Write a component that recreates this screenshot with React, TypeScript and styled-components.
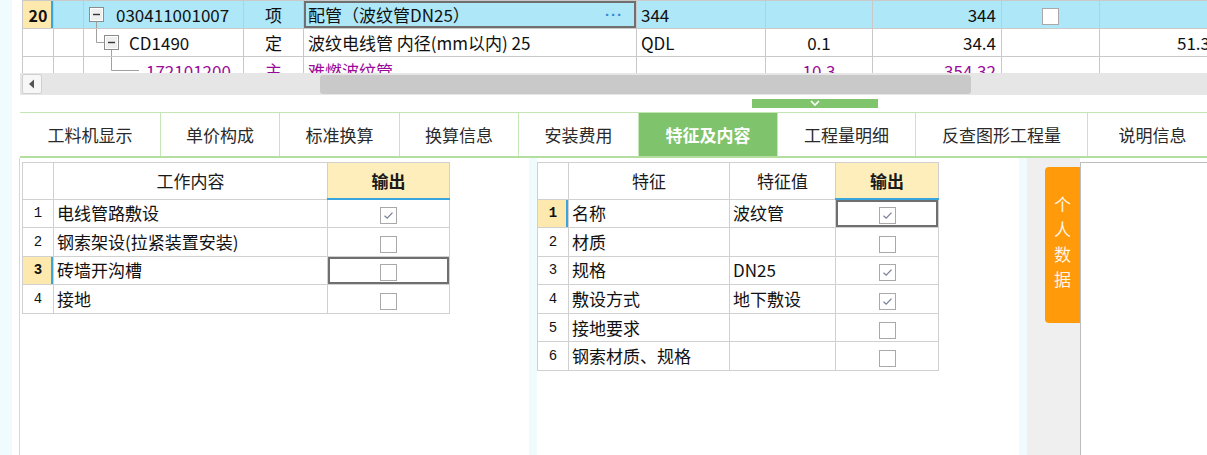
import styled, { createGlobalStyle } from "styled-components";

const GlobalStyle = createGlobalStyle`
  html, body {
    margin: 0;
    padding: 0;
    background: #ffffff;
  }
  body {
    font-family: "Noto Sans CJK SC", "Liberation Sans", sans-serif;
    color: #111;
    overflow: hidden;
  }
`;

const ROW_BLUE = "#aee7f8";
const HEAD_YELLOW = "#fde9ad";
const MARK_BLUE = "#38a5dc";
const LINE = "#c9c9c9";
const PURPLE = "#9a0a9a";

const Page = styled.div`
  display: flex;
  width: 1207px;
  height: 455px;
  overflow: hidden;
  background: #fff;
`;

const SideStrip = styled.div`
  flex: none;
  width: 12px;
  background: #f0fbfe;
`;

const Main = styled.div`
  flex: 1;
  min-width: 0;
  margin-left: 7px;
  display: flex;
  flex-direction: column;
`;

/* ---------- top grid ---------- */

const TopGridWrap = styled.div`
  height: 73px;
  overflow: hidden;
  padding-left: 3px;
`;

const GridTable = styled.table`
  border-collapse: collapse;
  table-layout: fixed;
  width: 1193px;
  font-size: 17px;
`;

const GridRow = styled.tr<{ $selected?: boolean; $purple?: boolean }>`
  height: 28px;
  background: ${(p) => (p.$selected ? ROW_BLUE : "#fff")};
  color: ${(p) => (p.$purple ? PURPLE : "#111")};
`;

const Cell = styled.td<{
  $align?: "left" | "center" | "right";
  $active?: boolean;
  $head?: boolean;
}>`
  height: 27px;
  padding: 0 ${(p) => (p.$align === "right" ? "5px" : "4px")};
  border: 1px solid ${LINE};
  text-align: ${(p) => p.$align ?? "left"};
  white-space: nowrap;
  overflow: hidden;
  box-sizing: border-box;
  line-height: 24px;
  ${(p) =>
    p.$head &&
    `background: ${HEAD_YELLOW}; font-weight: bold; font-size: 16px; box-shadow: inset -2px 0 0 ${MARK_BLUE};`}
  ${(p) => p.$active && `box-shadow: inset 0 0 0 2px #6f6f6f;`}
`;

const TreeCell = styled.td`
  height: 27px;
  padding: 0;
  border: 1px solid ${LINE};
  white-space: nowrap;
  overflow: hidden;
  box-sizing: border-box;
`;

const TreeInner = styled.div`
  display: flex;
  align-items: center;
  height: 27px;
`;

const TreeLabel = styled.span`
  line-height: 24px;
`;

const NameInner = styled.div`
  display: flex;
  align-items: center;
  justify-content: space-between;
`;

const MoreDots = styled.span`
  color: #3b86d6;
  font-family: "Liberation Sans", sans-serif;
  font-size: 15px;
  font-weight: bold;
  letter-spacing: 1px;
  padding-right: 9px;
`;

const Check = styled.span<{ $size?: number }>`
  display: inline-flex;
  align-items: center;
  justify-content: center;
  width: ${(p) => p.$size ?? 17}px;
  height: ${(p) => p.$size ?? 17}px;
  box-sizing: border-box;
  border: 1px solid #a9a9a9;
  background: #fff;
  vertical-align: middle;
`;

function CheckBox({ checked, size }: { checked?: boolean; size?: number }) {
  return (
    <Check $size={size}>
      {checked && (
        <svg width="13" height="13" viewBox="0 0 13 13">
          <path d="M2.5 6.8 L5.2 9.2 L10.5 3.6" fill="none" stroke="#7a8098" strokeWidth="1.3" />
        </svg>
      )}
    </Check>
  );
}

function TreeGutter({ level }: { level: number }) {
  const box = (x: number) => (
    <g>
      <rect x={x + 0.5} y={6.5} width={14} height={14} fill="#efefef" stroke="#8c8c8c" />
      <rect x={x + 1.5} y={7.5} width={12} height={12} fill="none" stroke="#ffffff" />
      <line x1={x + 4} y1={13.5} x2={x + 11} y2={13.5} stroke="#333" strokeWidth="1.4" />
    </g>
  );
  if (level === 0) {
    return (
      <svg width="32" height="27" viewBox="0 0 32 27">
        <line x1="12.5" y1="21" x2="12.5" y2="27" stroke="#a0a0a0" />
        {box(5)}
      </svg>
    );
  }
  if (level === 1) {
    return (
      <svg width="45" height="27" viewBox="0 0 45 27">
        <path d="M12.5 0 V13.5 H20" fill="none" stroke="#a0a0a0" />
        <line x1="27.5" y1="21" x2="27.5" y2="27" stroke="#a0a0a0" />
        {box(20)}
      </svg>
    );
  }
  return (
    <svg width="62" height="27" viewBox="0 0 62 27">
      <path d="M27.5 0 V13.5 H55" fill="none" stroke="#a0a0a0" />
    </svg>
  );
}

type TopRow = {
  no: string;
  level: number;
  code: string;
  type: string;
  name: string;
  unit: string;
  qty: string;
  amount: string;
  check?: boolean;
  last: string;
  selected?: boolean;
  purple?: boolean;
};

const topRows: TopRow[] = [
  {
    no: "20",
    level: 0,
    code: "030411001007",
    type: "项",
    name: "配管（波纹管DN25）",
    unit: "344",
    qty: "",
    amount: "344",
    check: true,
    last: "",
    selected: true,
  },
  {
    no: "",
    level: 1,
    code: "CD1490",
    type: "定",
    name: "波纹电线管 内径(mm以内) 25",
    unit: "QDL",
    qty: "0.1",
    amount: "34.4",
    last: "51.3",
  },
  {
    no: "",
    level: 2,
    code: "172101200",
    type: "主",
    name: "难燃波纹管",
    unit: "",
    qty: "10.3",
    amount: "354.32",
    last: "",
    purple: true,
  },
];

const topCols = [31, 30, 160, 60, 333, 129, 107, 129, 98, 116];

function TopGrid() {
  return (
    <TopGridWrap>
      <GridTable>
        <colgroup>
          {topCols.map((w, i) => (
            <col key={i} style={{ width: w }} />
          ))}
        </colgroup>
        <tbody>
          {topRows.map((r, i) => (
            <GridRow key={i} $selected={r.selected} $purple={r.purple}>
              <Cell $align="center" $head={r.selected}>
                {r.no}
              </Cell>
              <Cell />
              <TreeCell>
                <TreeInner>
                  <TreeGutter level={r.level} />
                  <TreeLabel>{r.code}</TreeLabel>
                </TreeInner>
              </TreeCell>
              <Cell $align="center">{r.type}</Cell>
              <Cell $active={r.selected}>
                <NameInner>
                  <span>{r.name}</span>
                  {r.selected && <MoreDots>···</MoreDots>}
                </NameInner>
              </Cell>
              <Cell>{r.unit}</Cell>
              <Cell $align="center">{r.qty}</Cell>
              <Cell $align="right">{r.amount}</Cell>
              <Cell $align="center">{r.check && <CheckBox />}</Cell>
              <Cell $align="right">{r.last}</Cell>
            </GridRow>
          ))}
        </tbody>
      </GridTable>
    </TopGridWrap>
  );
}

/* ---------- scrollbar + splitter ---------- */

const HScroll = styled.div`
  height: 22px;
  margin-left: 1px;
  background: #e6e6e6;
  display: flex;
  align-items: center;
`;

const ScrollButton = styled.div`
  width: 20px;
  height: 20px;
  margin-left: 2px;
  box-sizing: border-box;
  border: 1px solid #d0d0d0;
  border-radius: 2px;
  background: #f7f7f7;
  display: flex;
  align-items: center;
  justify-content: center;
`;

const ScrollThumb = styled.div`
  margin-left: 278px;
  width: 651px;
  height: 19px;
  border-radius: 3px;
  background: #c9c9c9;
`;

const SplitRow = styled.div`
  height: 17px;
  padding-left: 733px;
  padding-top: 4px;
  box-sizing: border-box;
`;

const SplitHandle = styled.div`
  width: 126px;
  height: 9px;
  background: #80c46c;
  display: flex;
  justify-content: center;
  align-items: center;
`;

/* ---------- tabs ---------- */

const TabBar = styled.div`
  display: flex;
  height: 46px;
  margin-left: 1px;
  box-sizing: border-box;
  border-top: 1px solid #c2e6b4;
  border-bottom: 2px solid #b2df9f;
  overflow: hidden;
`;

const Tab = styled.div<{ $width: number; $active?: boolean }>`
  flex: none;
  width: ${(p) => p.$width}px;
  box-sizing: border-box;
  display: flex;
  align-items: center;
  justify-content: center;
  border-right: 1px solid #c6e8b9;
  font-size: 17px;
  color: ${(p) => (p.$active ? "#ffffff" : "#2a2a2a")};
  font-weight: ${(p) => (p.$active ? "bold" : "normal")};
  background: ${(p) => (p.$active ? "#7fc46c" : "#ffffff")};
  margin-top: ${(p) => (p.$active ? "-1px" : "0")};
`;

const tabs = [
  { label: "工料机显示", width: 141 },
  { label: "单价构成", width: 119 },
  { label: "标准换算", width: 120 },
  { label: "换算信息", width: 119 },
  { label: "安装费用", width: 120 },
  { label: "特征及内容", width: 139, active: true },
  { label: "工程量明细", width: 138 },
  { label: "反查图形工程量", width: 172 },
  { label: "说明信息", width: 130 },
];

/* ---------- bottom panes ---------- */

const Bottom = styled.div`
  flex: 1;
  display: flex;
  min-height: 0;
`;

const LeftPane = styled.div`
  flex: none;
  width: 510px;
  box-sizing: border-box;
  border-left: 1px solid #d6d6d6;
  padding: 4px 0 0 2px;
  background: #fff;
`;

const Gutter = styled.div`
  flex: none;
  width: 8px;
  background: #f0fbfe;
`;

const MidPane = styled.div`
  flex: none;
  width: 482px;
  padding-top: 4px;
  background: #fff;
`;

const DockPane = styled.div`
  flex: none;
  width: 53px;
  box-sizing: border-box;
  padding: 9px 0 0 18px;
  background: #efefef;
`;

const DockTab = styled.div`
  width: 35px;
  height: 156px;
  box-sizing: border-box;
  border-radius: 4px 0 0 4px;
  background: #ff9a0a;
  color: #fff6e8;
  font-size: 17px;
  writing-mode: vertical-rl;
  letter-spacing: 8px;
  display: flex;
  align-items: center;
  padding-top: 29px;
`;

const RightPane = styled.div`
  flex: 1;
  margin-top: 4px;
  border-left: 1px solid #bdbdbd;
  border-top: 1px solid #bdbdbd;
  background: #fff;
`;

const SheetTable = styled.table`
  border-collapse: collapse;
  table-layout: fixed;
  font-size: 17px;
  border: 1px solid #bdbdbd;
`;

const SheetHead = styled.th<{ $out?: boolean }>`
  height: 35px;
  padding: 0;
  border: 1px solid #d0d0d0;
  font-weight: ${(p) => (p.$out ? "bold" : "normal")};
  background: ${(p) => (p.$out ? "#fdeebb" : "#fff")};
  ${(p) => p.$out && `border-bottom: 2px solid ${MARK_BLUE};`}
  color: #1a1a1a;
`;

const SheetRow = styled.tr`
  height: 28.6px;
`;

const RowNo = styled.td<{ $active?: boolean }>`
  padding: 0;
  border: 1px solid #d0d0d0;
  text-align: center;
  font-size: 14px;
  font-family: "Liberation Mono", "Noto Sans CJK SC", monospace;
  font-weight: ${(p) => (p.$active ? "bold" : "normal")};
  background: ${(p) => (p.$active ? HEAD_YELLOW : "#fff")};
  ${(p) => p.$active && `box-shadow: inset -2px 0 0 ${MARK_BLUE};`}
`;

const SheetCell = styled.td<{ $center?: boolean; $active?: boolean }>`
  padding: 0 3px;
  border: 1px solid #d0d0d0;
  white-space: nowrap;
  overflow: hidden;
  line-height: 26px;
  text-align: ${(p) => (p.$center ? "center" : "left")};
  ${(p) => p.$active && `box-shadow: inset 0 0 0 2px #6f6f6f;`}
`;

const workItems = [
  { name: "电线管路敷设", checked: true },
  { name: "钢索架设(拉紧装置安装)", checked: false },
  { name: "砖墙开沟槽", checked: false, active: true },
  { name: "接地", checked: false },
];

const features = [
  { name: "名称", value: "波纹管", checked: true, active: true },
  { name: "材质", value: "", checked: false },
  { name: "规格", value: "DN25", checked: true },
  { name: "敷设方式", value: "地下敷设", checked: true },
  { name: "接地要求", value: "", checked: false },
  { name: "钢索材质、规格", value: "", checked: false },
];

function WorkTable() {
  return (
    <SheetTable>
      <colgroup>
        <col style={{ width: 31 }} />
        <col style={{ width: 274 }} />
        <col style={{ width: 122 }} />
      </colgroup>
      <thead>
        <tr>
          <SheetHead />
          <SheetHead>工作内容</SheetHead>
          <SheetHead $out>输出</SheetHead>
        </tr>
      </thead>
      <tbody>
        {workItems.map((w, i) => (
          <SheetRow key={w.name}>
            <RowNo $active={w.active}>{i + 1}</RowNo>
            <SheetCell>{w.name}</SheetCell>
            <SheetCell $center $active={w.active}>
              <CheckBox checked={w.checked} />
            </SheetCell>
          </SheetRow>
        ))}
      </tbody>
    </SheetTable>
  );
}

function FeatureTable() {
  return (
    <SheetTable>
      <colgroup>
        <col style={{ width: 31 }} />
        <col style={{ width: 161 }} />
        <col style={{ width: 106 }} />
        <col style={{ width: 103 }} />
      </colgroup>
      <thead>
        <tr>
          <SheetHead />
          <SheetHead>特征</SheetHead>
          <SheetHead>特征值</SheetHead>
          <SheetHead $out>输出</SheetHead>
        </tr>
      </thead>
      <tbody>
        {features.map((f, i) => (
          <SheetRow key={f.name}>
            <RowNo $active={f.active}>{i + 1}</RowNo>
            <SheetCell>{f.name}</SheetCell>
            <SheetCell>{f.value}</SheetCell>
            <SheetCell $center $active={f.active}>
              <CheckBox checked={f.checked} />
            </SheetCell>
          </SheetRow>
        ))}
      </tbody>
    </SheetTable>
  );
}

export default function App() {
  return (
    <>
      <GlobalStyle />
      <Page>
        <SideStrip />
        <Main>
          <TopGrid />
          <HScroll>
            <ScrollButton>
              <svg width="8" height="10" viewBox="0 0 8 10">
                <path d="M6 0.5 L1 5 L6 9.5 Z" fill="#555" />
              </svg>
            </ScrollButton>
            <ScrollThumb />
          </HScroll>
          <SplitRow>
            <SplitHandle>
              <svg width="12" height="8" viewBox="0 0 12 8">
                <path d="M2 1 L6 5 L10 1" fill="none" stroke="#fff" strokeWidth="1.6" />
              </svg>
            </SplitHandle>
          </SplitRow>
          <TabBar>
            {tabs.map((t) => (
              <Tab key={t.label} $width={t.width} $active={t.active}>
                {t.label}
              </Tab>
            ))}
          </TabBar>
          <Bottom>
            <LeftPane>
              <WorkTable />
            </LeftPane>
            <Gutter />
            <MidPane>
              <FeatureTable />
            </MidPane>
            <Gutter />
            <DockPane>
              <DockTab>个人数据</DockTab>
            </DockPane>
            <RightPane />
          </Bottom>
        </Main>
      </Page>
    </>
  );
}
